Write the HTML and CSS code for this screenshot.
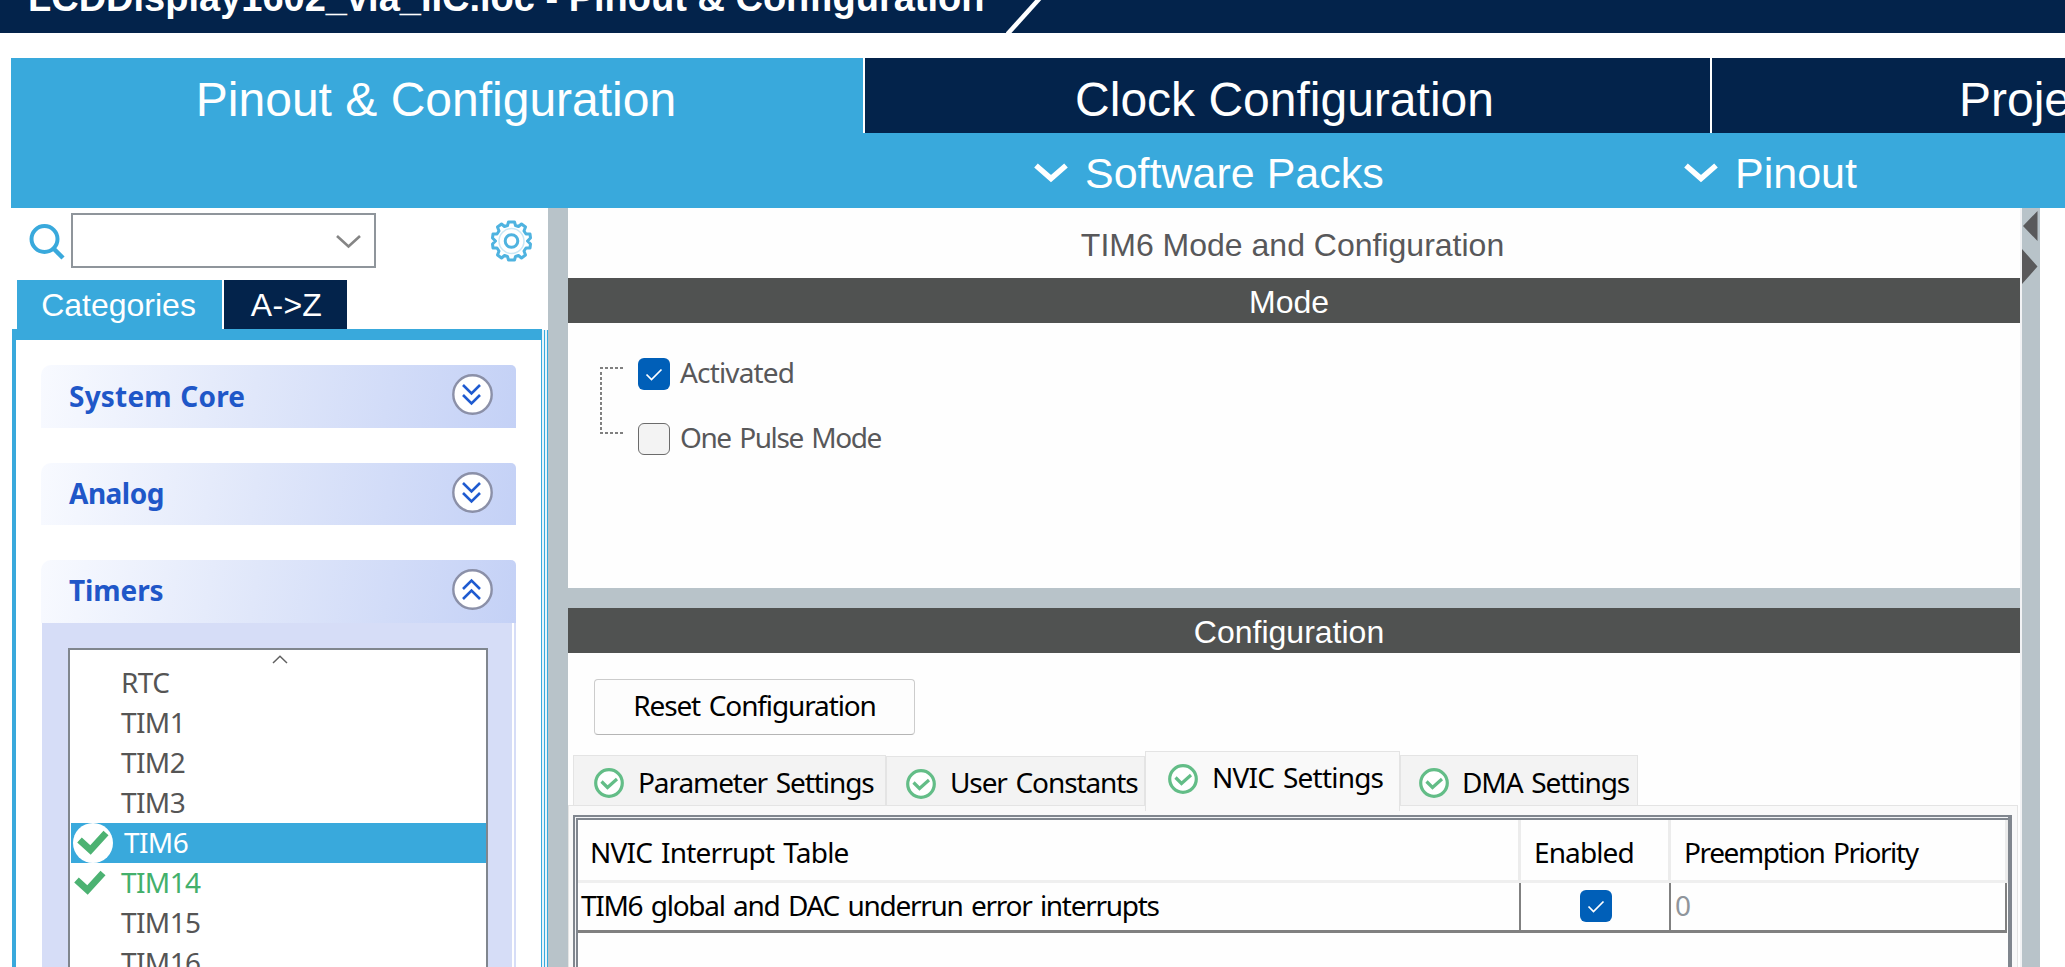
FILE: index.html
```html
<!DOCTYPE html>
<html lang="en">
<head>
<meta charset="utf-8">
<title>Pinout &amp; Configuration</title>
<link rel="stylesheet" href="styles.css">
</head>
<body>
<svg width="0" height="0" class="defs" aria-hidden="true">
  <symbol id="chev" viewBox="0 0 34 20"><path d="M2 2.500 L17 15.500 L32 2.500" fill="none" stroke="#fff" stroke-width="5.500"/></symbol>
  <symbol id="tick" viewBox="0 0 32 32"><path d="M8.500 16.500 L13.500 21.500 L23.500 11.500" fill="none" stroke="#fff" stroke-width="1.700"/></symbol>
  <symbol id="ok" viewBox="0 0 30 30"><circle cx="15" cy="15" r="13.300" fill="#fff" stroke="#63bd87" stroke-width="3.200"/><path d="M7.500 13.500 L13.500 19.500 L23 11" fill="none" stroke="#63bd87" stroke-width="3.200"/></symbol>
  <symbol id="check" viewBox="0 0 32 28"><path d="M2.500 11 L13.500 21 L29 4" fill="none" stroke="#4cb272" stroke-width="6.800"/></symbol>
  <symbol id="dbl" viewBox="0 0 41 41"><circle cx="20.500" cy="20.500" r="19.200" fill="#fff" stroke="#8b90a8" stroke-width="2.400"/><path d="M11 11 L19.500 19.500 L28 11 M11 21 L19.500 29.500 L28 21" fill="none" stroke="#1f5bd0" stroke-width="2.600"/></symbol>
</svg>
<div class="app">
  <header class="title">
    <span class="title-text">LCDDisplay1602_via_IIC.ioc - Pinout &amp; Configuration</span>
    <svg class="slash" width="44" height="33"><path d="M3.500 34 L36 -2" stroke="#fff" stroke-width="4.500"/></svg>
  </header>
  <nav class="tabs">
    <div class="tab on">Pinout &amp; Configuration</div>
    <div class="tab clock">Clock Configuration</div>
    <div class="tab last">Project Manager</div>
  </nav>
  <div class="menu">
    <div class="menu-item packs"><svg width="34" height="20"><use href="#chev"/></svg>Software Packs</div>
    <div class="menu-item"><svg width="34" height="20"><use href="#chev"/></svg>Pinout</div>
  </div>
  <div class="work">
    <aside class="side">
      <div class="search">
        <svg class="lens" width="36" height="38" viewBox="0 0 36 38"><circle cx="15.500" cy="16" r="13" fill="none" stroke="#39a9dc" stroke-width="4"/><path d="M25 26 L34 35" stroke="#39a9dc" stroke-width="4.500"/></svg>
        <div class="combo"><svg width="25" height="16" viewBox="0 0 25 16"><path d="M1 2 L12.500 12.500 L24 2" fill="none" stroke="#858585" stroke-width="2.600"/></svg></div>
        <svg class="gear" width="41" height="42" viewBox="-20.500 -21 41 42" fill="none" stroke="#4fb3e0">
          <circle r="6.300" stroke-width="3"/>
          <path stroke-width="3" stroke-linejoin="round" d="M-3 -19 H3 L4 -15.500 L7 -14.500 L10 -17 L14 -14 L12.500 -10 L14.500 -7 L18.500 -7 L19 -3 L16 0 L19 3 L18.500 7 L14.500 7 L12.500 10 L14 14 L10 17 L7 14.500 L4 15.500 L3 19 H-3 L-4 15.500 L-7 14.500 L-10 17 L-14 14 L-12.500 10 L-14.500 7 L-18.500 7 L-19 3 L-16 0 L-19 -3 L-18.500 -7 L-14.500 -7 L-12.500 -10 L-14 -14 L-10 -17 L-7 -14.500 L-4 -15.500 Z"/>
          <circle r="12.500" stroke-width="1.500" stroke="#c9e7f6"/>
        </svg>
      </div>
      <div class="cats"><div class="cat on">Categories</div><div class="cat">A-&gt;Z</div></div>
      <div class="tree">
        <div class="tree-in">
          <section class="group"><div class="ghead core"><span>System Core</span><svg width="41" height="41"><use href="#dbl"/></svg></div></section>
          <section class="group"><div class="ghead short"><span>Analog</span><svg width="41" height="41"><use href="#dbl"/></svg></div></section>
          <section class="group">
            <div class="ghead"><span>Timers</span><svg class="up" width="41" height="41"><use href="#dbl"/></svg></div>
            <div class="gbody">
              <div class="list">
                <div class="scroll-up"><svg width="16" height="9" viewBox="0 0 16 9"><path d="M1 8 L8 1.300 L15 8" fill="none" stroke="#606060" stroke-width="1.500"/></svg></div>
                <div class="row"><i></i>RTC</div>
                <div class="row"><i></i>TIM1</div>
                <div class="row"><i></i>TIM2</div>
                <div class="row"><i></i>TIM3</div>
                <div class="row sel"><i><svg width="32" height="28"><use href="#check"/></svg></i>TIM6</div>
                <div class="row green"><i><svg width="32" height="28"><use href="#check"/></svg></i>TIM14</div>
                <div class="row"><i></i>TIM15</div>
                <div class="row"><i></i>TIM16</div>
              </div>
            </div>
            <div class="gedge"></div>
          </section>
        </div>
        <div class="rails"></div>
      </div>
    </aside>
    <div class="split"></div>
    <main class="main">
      <div class="heading">TIM6 Mode and Configuration</div>
      <div class="bar">Mode</div>
      <div class="mode">
        <svg class="branch" width="26" height="98" viewBox="0 0 26 98"><path d="M1 10 H25 M2 14 V75 M1 75 H25" fill="none" stroke="#808080" stroke-width="2" stroke-dasharray="3 2"/></svg>
        <div class="opts">
          <div class="opt"><span class="box checked"><svg width="32" height="32"><use href="#tick"/></svg></span><span class="w-act">Activated</span></div>
          <div class="opt"><span class="box"></span><span class="w-one">One Pulse Mode</span></div>
        </div>
      </div>
      <div class="hsplit"></div>
      <div class="bar">Configuration</div>
      <div class="reset-row"><button class="reset">Reset Configuration</button></div>
      <div class="ptabs">
        <div class="ptab p1"><svg width="30" height="30"><use href="#ok"/></svg><span>Parameter Settings</span></div>
        <div class="ptab p2"><svg width="30" height="30"><use href="#ok"/></svg><span>User Constants</span></div>
        <div class="ptab p3"><svg width="30" height="30"><use href="#ok"/></svg><span>NVIC Settings</span></div>
        <div class="ptab p4"><svg width="30" height="30"><use href="#ok"/></svg><span>DMA Settings</span></div>
      </div>
      <div class="pane">
        <div class="frame"><div class="table">
          <div class="th c1">NVIC Interrupt Table</div><div class="th c2">Enabled</div><div class="th c3">Preemption Priority</div>
          <div class="td d1">TIM6 global and DAC underrun error interrupts</div>
          <div class="td d2"><span class="box checked"><svg width="32" height="32"><use href="#tick"/></svg></span></div>
          <div class="td d3">0</div>
        </div></div>
      </div>
    </main>
    <div class="vbar">
      <svg width="18" height="80" viewBox="0 0 18 80"><path d="M15.500 3 V33 L1 18 Z M0 41 V76 L15.500 58.500 Z" fill="#59595b"/></svg>
    </div>
  </div>
</div>
</body>
</html>
```

FILE: styles.css
```css
* { box-sizing: border-box; }
body { margin: 0; background: #fff; overflow: hidden; }
svg { display: block; flex: none; }
.defs { position: absolute; }
.app { width: 2065px; height: 967px; overflow: hidden; display: flex; flex-direction: column; font-family: "Liberation Sans", Arial, sans-serif; }

.title { height: 33px; flex: none; background: #03234b; color: #fff; display: flex; overflow: hidden; padding-left: 28px; margin-bottom: 25px; font-weight: bold; font-size: 38px; line-height: 44px; white-space: nowrap; }
.title-text { margin-top: -24px; width: 976px; height: 44px; }

.tabs { height: 75px; flex: none; display: flex; margin-left: 11px; background: #03234b; color: #fff; font-size: 48px; overflow: hidden; }
.tab { width: 847px; flex: none; height: 75px; line-height: 75px; padding-top: 4px; text-align: center; border-left: 2px solid #fff; white-space: nowrap; }
.tab.on { width: 852px; border-left: 0; background: #39a9dc; padding-right: 2px; }
.tab.clock { padding-right: 6px; }
.tab.last { width: 860px; text-align: left; padding-left: 247px; }

.menu { height: 75px; flex: none; margin-left: 11px; background: #39a9dc; color: #fff; display: flex; padding: 5px 0 0 1023px; font-size: 43px; }
.menu-item { display: flex; align-items: center; gap: 17px; }
.menu-item svg { margin-top: -1px; }
.menu-item.packs { width: 650px; }

.work { flex: 1; min-height: 0; display: flex; }
.side { width: 548px; flex: none; display: flex; flex-direction: column; }
.search { height: 72px; flex: none; display: flex; align-items: flex-start; padding: 5px 0 0 29px; }
.lens { margin: 10px 6px 0 0; }
.combo { width: 305px; height: 55px; border: 2px solid #8f959b; background: #fff; display: flex; justify-content: flex-end; padding: 19px 13px 0 0; }
.gear { margin: 7px 0 0 115px; }
.cats { display: flex; gap: 2px; height: 49px; flex: none; padding-left: 17px; font-size: 32px; line-height: 50px; color: #fff; text-align: center; }
.cat { width: 123px; background: #03234b; letter-spacing: .3px; padding-left: 2px; }
.cat.on { width: 205px; background: #39a9dc; padding: 0 2px 0 0; letter-spacing: 0; }
.tree { flex: 1; min-height: 0; display: flex; margin-left: 12px; }
.tree-in { width: 530px; flex: none; border: 0 solid #39a9dc; border-width: 11px 1px 0 4px; padding: 25px 0 0 25px; overflow: hidden; }
.rails { width: 6px; margin-top: 1px; background: linear-gradient(90deg, #e8f4fb 2px, #39a9dc 2px 3px, #e8f4fb 3px 5px, #39a9dc 5px); }

.group { width: 475px; margin-bottom: 35px; font-family: "Noto Sans", Tahoma, sans-serif; font-size: 28px; position: relative; }
.ghead { height: 63px; border-radius: 10px 5px 0 0; background: linear-gradient(100deg, #f8faff, #e0e7fa 45%, #c4d1f6); display: flex; justify-content: space-between; align-items: flex-start; padding: 9px 23px 0 28px; color: #1f57c8; font-weight: bold; line-height: 42px; letter-spacing: -.1px; }
.ghead.short { height: 62px; letter-spacing: -.5px; }
.ghead.core span { letter-spacing: .2px; word-spacing: 1px; margin-top: 1px; }
.up { transform: scaleY(-1); }
.gbody { margin-left: 1px; height: 400px; background: #d6ddf7; padding: 25px 28px 0 26px; }
.gedge { position: absolute; right: 2px; top: 63px; width: 2px; height: 400px; background: #fff; }
.list { height: 375px; border: 2px solid #80868e; background: #fff; color: #555; }
.scroll-up { height: 13px; display: flex; justify-content: center; padding: 5px 0 0 4px; }
.row { height: 40px; line-height: 38px; margin-left: 1px; display: flex; white-space: nowrap; letter-spacing: -.6px; }
.row i { width: 40px; height: 40px; margin-right: 10px; flex: none; border-radius: 50%; display: flex; align-items: center; justify-content: center; }
.row.sel { background: #39a9dc; color: #fff; }
.row.sel i { background: #fff; margin: 0 11px 0 2px; }
.row.green { color: #43b06c; }
.row.green i { padding-right: 3px; }

.split { width: 20px; flex: none; background: #b8c3c9; }
.main { width: 1452px; flex: none; display: flex; flex-direction: column; background: #fefefe; }
.heading { height: 70px; flex: none; line-height: 70px; padding: 2px 3px 0 0; text-align: center; font-size: 32px; color: #58585a; }
.bar { height: 45px; flex: none; line-height: 48px; background: #505251; color: #fff; text-align: center; font-size: 32px; padding-right: 10px; }
.mode, .reset, .ptabs, .table { font-family: "Noto Sans", Tahoma, sans-serif; font-size: 28px; word-spacing: 2.5px; }
.mode { height: 265px; flex: none; display: flex; padding: 35px 0 0 31px; color: #58585a; }
.opts { display: flex; flex-direction: column; gap: 33px; margin-left: 13px; }
.opt { display: flex; gap: 10px; height: 32px; line-height: 28px; white-space: nowrap; }
.box { display: block; width: 32px; height: 32px; flex: none; border: 1px solid #6b6b6b; border-radius: 6px; background: #f3f3f3; }
.box.checked { border: 0; background: #005fb8; }
.w-act { letter-spacing: -.850px; }
.w-one { letter-spacing: -1.400px; }
.hsplit { height: 20px; flex: none; background: #b8c3c9; }
.reset-row { height: 98px; flex: none; padding: 26px 0 0 26px; }
.reset { display: block; width: 321px; height: 56px; border: 1px solid #ccc; border-bottom-color: #b5b5b5; border-radius: 4px; background: #fdfdfd; color: #000; letter-spacing: -1.120px; padding: 0 0 4px; line-height: 50px; }
.ptabs { height: 54px; flex: none; display: flex; align-items: flex-end; padding-left: 5px; color: #000; }
.ptab { height: 50px; line-height: 44px; background: #f3f3f3; border: 1px solid #e4e4e4; border-bottom: 0; display: flex; align-items: center; padding: 5px 0 0; white-space: nowrap; }
.ptab span { margin-top: -3px; }
.p1 { width: 313px; padding-left: 20px; gap: 14px; letter-spacing: -1.080px; }
.p2 { width: 259px; height: 49px; padding-left: 19px; gap: 14px; letter-spacing: -1.100px; }
.p3 { width: 255px; height: 60px; margin-bottom: -6px; padding: 0 0 6px 22px; gap: 14px; background: #f9f9f9; letter-spacing: -.800px; position: relative; }
.p4 { width: 238px; padding-left: 18px; letter-spacing: -1.070px; gap: 13px; }
.pane { flex: 1; width: 1450px; border: 1px solid #e4e4e4; border-bottom: 0; background: #f9f9f9; padding: 9px 0 0 4px; }
.frame { width: 1439px; height: 160px; border: 2px solid #80868e; border-right-width: 4px; background: #f3f4f6; padding: 1px 0 0 1px; }
.table { height: 157px; border: 0 solid #80868e; border-width: 2px 0 0 2px; background: #fefefe; display: grid; grid-template-columns: 943px 150px 337px; grid-template-rows: 63px 50px; color: #000; white-space: nowrap; }
.th { border-bottom: 3px solid #efefef; border-right: 3px solid #ececec; line-height: 64px; }
.td { border-bottom: 3px solid #808080; border-right: 2px solid #808080; line-height: 44px; }
.c1 { padding-left: 12px; letter-spacing: -.800px; }
.c2 { padding-left: 13px; letter-spacing: -.900px; }
.c3 { padding-left: 13px; letter-spacing: -1.400px; }
.d1 { padding-left: 3px; letter-spacing: -1.290px; }
.d2 { padding: 7px 0 0 59px; }
.d3 { padding-left: 4px; color: #8f959b; margin-right: 1px; }
.vbar { width: 20px; flex: none; border-left: 2px solid #f1f2f4; background: #b8c3c9; }
```
